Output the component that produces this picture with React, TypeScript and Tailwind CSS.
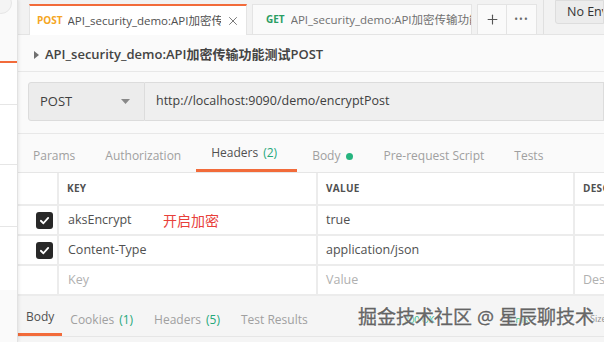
import { Plus, X } from "lucide-react";

const font = { fontFamily: '"Open Sans", "Noto Sans CJK SC", sans-serif' };

function Check() {
  return (
    <div className="w-[17px] h-[17px] rounded-[3px] bg-[#282828] flex items-center justify-center">
      <svg width="11" height="11" viewBox="0 0 12 12">
        <path d="M2 6.3 L4.8 9 L10 3.2" fill="none" stroke="#fff" strokeWidth="2" strokeLinecap="round" strokeLinejoin="round" />
      </svg>
    </div>
  );
}

interface Row {
  key: string;
  value: string;
  checked: boolean;
  note?: string;
  placeholder?: boolean;
}

const rows: Row[] = [
  { key: "aksEncrypt", value: "true", checked: true, note: "开启加密" },
  { key: "Content-Type", value: "application/json", checked: true },
  { key: "Key", value: "Value", checked: false, placeholder: true },
];

export default function App() {
  return (
    <div className="w-[604px] h-[342px] overflow-hidden flex bg-[#fafafa] text-[#505050]" style={font}>
      {/* sidebar strip */}
      <div className="w-[18px] shrink-0 flex flex-col border-r border-[#e2e2e2] shadow-[1px_0_3px_rgba(0,0,0,0.08)] z-10">
        <div className="h-[61px] bg-[#fafafa] relative">
          <div className="absolute -left-[10px] -top-[8px] w-[22px] h-[22px] rounded-full border border-[#e6e6e6] bg-[#f4f4f4]" />
        </div>
        <div className="h-[2px] bg-[#f26b3a]" />
        <div className="h-[42px] bg-white border-b border-[#e6e6e6]" />
        <div className="h-[60px] bg-white border-b border-[#e6e6e6]" />
        <div className="h-[62px] bg-white border-b border-[#e6e6e6]" />
        <div className="h-[63px] bg-white" />
        <div className="flex-1 bg-[#fafafa]" />
      </div>

      <div className="flex-1 flex flex-col min-w-0">
        {/* tab bar */}
        <div className="h-[35px] shrink-0 flex items-end bg-[#f2f2f2] border-b border-[#e4e4e4] pl-[11px]">
          <div className="w-[218px] shrink-0 h-[31px] bg-white border-t-2 border-[#f26b3a] border-x border-x-[#e4e4e4] flex items-center pl-[7px] pr-[6px] gap-[5px] -mb-px">
            <span className="text-[10px] font-bold text-[#f5a623]">POST</span>
            <span className="text-[11.5px] text-[#505050] whitespace-nowrap overflow-hidden flex-1">API_security_demo:API加密传输功能测试POST</span>
            <X size={14} strokeWidth={1.6} className="text-[#707070] shrink-0" />
          </div>
          <div className="ml-[5px] w-[220px] shrink-0 h-[30px] bg-[#fafafa] border border-[#e4e4e4] border-b-0 flex items-center pl-[13px] gap-[6px]">
            <span className="text-[10px] font-bold text-[#2a9d63]">GET</span>
            <span className="text-[11.5px] text-[#707070] whitespace-nowrap overflow-hidden flex-1">API_security_demo:API加密传输功能测试GET</span>
          </div>
          <div className="ml-[5px] shrink-0 h-[30px] flex border border-[#e4e4e4] border-b-0 bg-[#fafafa]">
            <div className="w-[29px] flex items-center justify-center border-r border-[#e4e4e4]">
              <Plus size={15} strokeWidth={1.8} className="text-[#555]" />
            </div>
            <div className="w-[29px] flex items-center justify-center text-[#666] text-[10px] tracking-[1px]">•••</div>
          </div>
          <div className="ml-[6px] shrink-0 h-[35px] w-px bg-[#e0e0e0]" />
          <div className="self-start ml-[11px] h-[24px] flex-1 bg-[#ececec] border border-[#dddddd] rounded-bl-[3px] flex items-center pl-[11px] text-[12.5px] text-[#333] whitespace-nowrap overflow-hidden">
            No Environment
          </div>
        </div>

        {/* title */}
        <div className="h-[37px] shrink-0 flex items-center pt-[3px] pl-[16px] gap-[6px] border-b border-[#e8e8e8]">
          <svg width="5" height="8" viewBox="0 0 5 8"><path d="M0 0 L5 4 L0 8 Z" fill="#707070" /></svg>
          <span className="text-[13px] font-semibold text-[#444] whitespace-nowrap">API_security_demo:API加密传输功能测试POST</span>
        </div>

        {/* url row */}
        <div className="mt-[10px] ml-[10px] h-[39px] shrink-0 flex">
          <div className="w-[117px] shrink-0 bg-[#ececec] border border-[#dcdcdc] rounded-l-[3px] flex items-center pl-[11px] pr-[14px] justify-between">
            <span className="text-[13px] text-[#404040]">POST</span>
            <svg width="9" height="5" viewBox="0 0 9 5"><path d="M0 0 L9 0 L4.5 5 Z" fill="#888" /></svg>
          </div>
          <div className="flex-1 bg-[#efefef] border border-l-0 border-[#dcdcdc] flex items-center pl-[11px] text-[12.5px] text-[#404040] whitespace-nowrap">
            http://localhost:9090/demo/encryptPost
          </div>
        </div>

        {/* request tabs */}
        <div className="mt-[12px] h-[39px] shrink-0 flex items-end border-t border-[#e8e8e8] pl-[15px] text-[12px] text-[#a0a0a0]">
          <div className="h-full flex items-center pt-[6px]">Params</div>
          <div className="h-full flex items-center pt-[6px] ml-[30px]">Authorization</div>
          <div className="h-full flex items-center pt-[3px] ml-[15px] pl-[15px] pr-[20px] border-b-[3px] border-[#f26b3a] text-[#505050]">
            Headers<span className="ml-[5px] text-[#26a87a]">(2)</span>
          </div>
          <div className="h-full flex items-center pt-[6px] ml-[15px] gap-[6px]">
            Body<span className="w-[7px] h-[7px] rounded-full bg-[#26b47f]" />
          </div>
          <div className="h-full flex items-center pt-[6px] ml-[30px]">Pre-request Script</div>
          <div className="h-full flex items-center pt-[6px] ml-[30px]">Tests</div>
        </div>

        {/* headers table */}
        <div className="shrink-0 bg-white border-t border-[#e6e6e6]">
          <div className="h-[33px] flex border-b-2 border-[#ececec] text-[10px] font-bold text-[#505050] tracking-[0.3px]">
            <div className="w-[41px] shrink-0 border-r-2 border-[#ececec]" />
            <div className="w-[259px] shrink-0 flex items-center pl-[8px] border-r-2 border-[#ececec]">KEY</div>
            <div className="w-[257px] shrink-0 flex items-center pl-[8px] border-r-2 border-[#ececec]">VALUE</div>
            <div className="flex-1 min-w-0 overflow-hidden flex items-center pl-[8px] whitespace-nowrap">DESCRIPTION</div>
          </div>
          {rows.map((r) => (
            <div key={r.key} className="h-[30px] flex border-b-2 border-[#ececec] text-[12.5px]">
              <div className="w-[41px] shrink-0 flex items-center justify-end pr-[4px] border-r-2 border-[#ececec]">
                {r.checked && <Check />}
              </div>
              <div className={`w-[259px] shrink-0 flex items-center pl-[9px] border-r-2 border-[#ececec] ${r.placeholder ? "text-[#b0b0b0]" : "text-[#505050]"}`}>
                <span className="w-[95px]">{r.key}</span>
                {r.note && <span className="text-[14px] text-[#e8403a]">{r.note}</span>}
              </div>
              <div className={`w-[257px] shrink-0 flex items-center pl-[8px] border-r-2 border-[#ececec] ${r.placeholder ? "text-[#b0b0b0]" : "text-[#505050]"}`}>
                {r.value}
              </div>
              <div className="flex-1 min-w-0 flex items-center pl-[8px] text-[#b0b0b0] whitespace-nowrap overflow-hidden">
                {r.placeholder ? "Description" : ""}
              </div>
            </div>
          ))}
        </div>

        {/* response tabs */}
        <div className="relative flex-1 bg-[#f5f5f5]">
          <div className="h-[41px] flex items-end border-b border-[#e6e6e6] text-[12px] text-[#a0a0a0]">
            <div className="h-full flex items-center pt-[5px] px-[8px] border-b-[3px] border-[#f26b3a] text-[#505050]">Body</div>
            <div className="h-full flex items-center pt-[8px] ml-[8px]">
              Cookies<span className="ml-[5px] text-[#26a87a]">(1)</span>
            </div>
            <div className="h-full flex items-center pt-[8px] ml-[21px]">
              Headers<span className="ml-[5px] text-[#26a87a]">(5)</span>
            </div>
            <div className="h-full flex items-center pt-[8px] ml-[21px] whitespace-nowrap">Test Results</div>
          </div>
          <div className="absolute left-[386px] top-[17px] text-[9px] text-[#26b47f]">200 OK</div>
          <div className="absolute left-[490px] top-[17px] text-[9px] text-[#26b47f]">1 ms</div>
          <div className="absolute left-[572px] top-[16px] text-[9px] text-[#909090]">Size</div>
          <div
            className="absolute left-[340px] top-[9px] text-[19px] leading-[24px] text-[#6a6a6a] whitespace-nowrap"
            style={{ WebkitTextStroke: "0.3px #555", textShadow: "0 0 2px #fff, 0 0 2px #fff" }}
          >
            掘金技术社区 @ 星辰聊技术
          </div>
        </div>
      </div>
    </div>
  );
}
